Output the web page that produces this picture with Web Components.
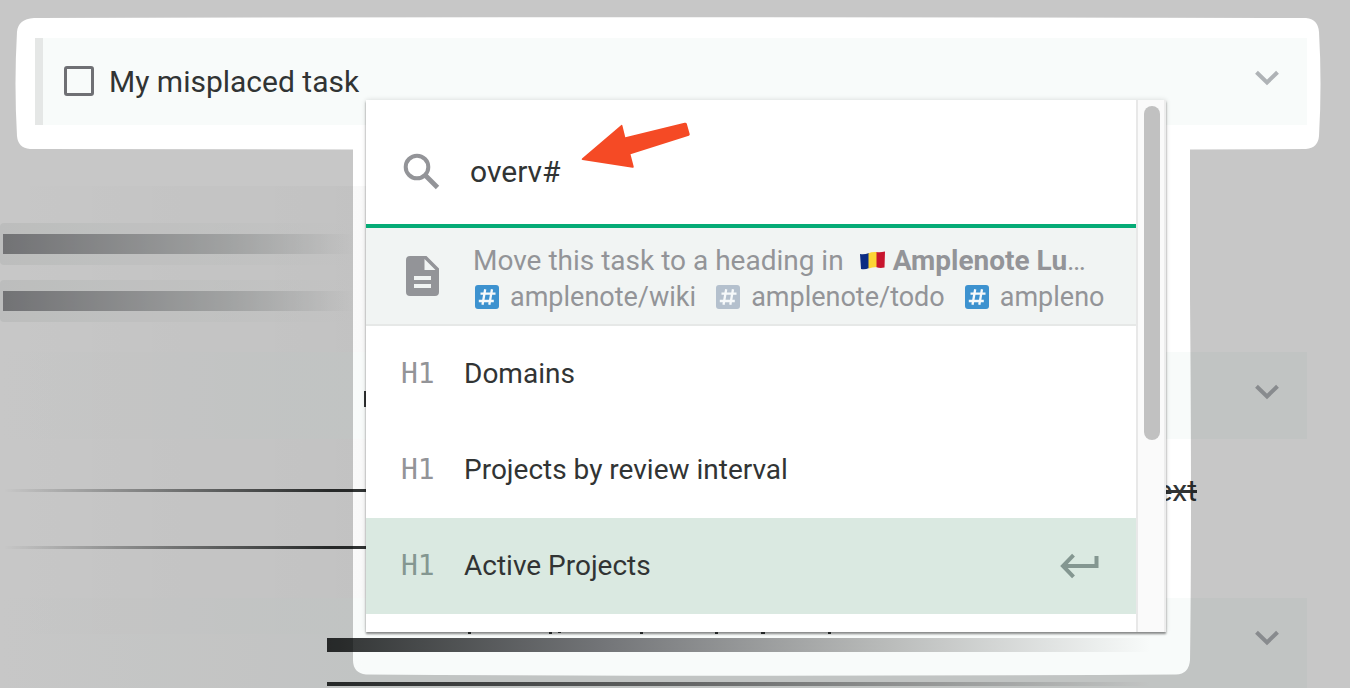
<!DOCTYPE html>
<html lang="en">
<head>
<meta charset="utf-8">
<title>Move task</title>
<style>
  body { margin: 0; background: #fff; font-family: Roboto, "Liberation Sans", sans-serif; color: #313434; }
</style>
</head>
<body>
<note-page></note-page>
<script>
const define = (name, html) => {
  const template = document.createElement('template');
  template.innerHTML = html;
  customElements.define(name, class extends HTMLElement {
    constructor() {
      super();
      this.attachShadow({ mode: 'open' }).append(template.content.cloneNode(true));
    }
  });
};

define('chevron-button', `
  <style>
    :host { display: block; }
    button { display: block; border: 0; padding: 8px; background: none; color: #afb3b6; }
    svg { display: block; }
  </style>
  <button type="button" aria-label="Expand task">
    <svg width="24" height="16" viewBox="0 0 24 16" fill="none" stroke="currentColor" stroke-width="4"><path d="M1.500 2.200 12 12.500 22.500 2.200"/></svg>
  </button>`);

define('task-row', `
  <style>
    :host { display: flex; align-items: flex-start; height: 87px; box-sizing: border-box; background: #f8fbfa; }
    .body { flex: 1; min-width: 0; }
    chevron-button { margin: 24px 20px 0 0; }
  </style>
  <div class="body"><slot></slot></div>
  <chevron-button></chevron-button>`);

define('task-check', `
  <style>
    :host { display: block; }
    label { display: flex; align-items: center; gap: 15px; height: 86px; padding-left: 21px; font-size: 30px; line-height: 40px; }
    input { appearance: none; margin: 0; width: 30px; height: 30px; box-sizing: border-box; border: 3px solid #6f7074; border-radius: 3px; }
    span { padding-top: 2px; }
  </style>
  <label><input type="checkbox"><span><slot></slot></span></label>`);

/* A blurred-out line of text: fades from a solid left end. */
define('smear-bar', `
  <style>
    :host { display: block; background: linear-gradient(to right, #f1f3f2, #f1f3f200 353px); border-radius: 4px; padding: 11px 0 11px 3px; }
    div { height: 20px; background: linear-gradient(to right, #929396, #ced0d0 225px, #f9f9f900 350px); }
  </style>
  <div></div>`);

/* A struck-out line whose visible text is aligned to the right. */
define('struck-line', `
  <style>
    :host { display: flex; align-items: center; height: 57px; }
    i { width: 366px; height: 3px; background: linear-gradient(to right, #31343400 4px, #313434 330px); }
    del { margin: 0 153px 0 auto; font-size: 30px; line-height: 40px; text-decoration: line-through 3px; }
  </style>
  <i></i><del><slot></slot></del>`);

define('spotlight-mask', `
  <style>
    :host { display: block; position: absolute; inset: 0; pointer-events: none; }
    svg { display: block; width: 100%; height: 100%; }
  </style>
  <svg viewBox="0 0 1350 688" preserveAspectRatio="none" fill="#000" fill-opacity=".218" fill-rule="evenodd">
    <path d="M0 0H1350V688H0Z M34 18Q675 16.500 1306 18Q1318 19 1319 32Q1322 84 1319 136Q1318 148 1306 149L1190 149.500V300Q1192 520 1190 660Q1189 674 1176 674.600Q760 677 366 674.500Q353 673 353 660V149.500L30 149Q18 148 17 136Q14 84 17 32Q18 19 34 18Z"/>
  </svg>`);

define('red-arrow', `
  <style>:host { display: block; } svg { display: block; }</style>
  <svg width="110" height="48" viewBox="581 121 110 48" fill="#f54a25"><path d="M582 158.500 621 125.200Q622 124.300 622.400 125.500L625.300 137.300 684.500 122.800Q686.300 122.200 686.800 123.800L689.700 134Q690 135.300 688.800 135.800L630.500 154.200 633.700 166.500Q634 168 632.500 167.700L582.500 160Q581 159.500 582 158.500Z"/></svg>`);

define('search-box', `
  <style>
    :host { display: block; background: #fff; border-bottom: 4px solid #05ab76; }
    label { display: flex; align-items: center; height: 124px; padding: 0 36px; gap: 30px; }
    svg { flex: none; margin-top: 18px; }
    input { flex: 1; min-width: 0; border: 0; outline: 0; padding: 0; margin-top: 20px; background: none; font: 30px/40px Roboto, "Liberation Sans", sans-serif; color: #313434; }
  </style>
  <label>
    <svg width="38" height="38" viewBox="0 0 38 38" fill="none" stroke="#939498"><circle cx="15" cy="15" r="11.300" stroke-width="4"/><path d="M23.500 23.500 35.500 35.500" stroke-width="4.800"/></svg>
    <input type="text" value="overv#" aria-label="Search notes">
  </label>`);

define('tag-label', `
  <style>
    :host { display: flex; align-items: center; gap: 11px; flex: none; --tag: #3d92cf; }
    :host([muted]) { --tag: #b4c0cd; }
  </style>
  <svg width="24" height="24" viewBox="0 0 24 24"><rect width="24" height="24" rx="3" fill="var(--tag)"/><path d="M5.500 8.600H20.500M3.800 16H18.800M10.200 4.200 7.500 19.800M17 4.200 14.300 19.800" stroke="#f6f9fa" stroke-width="2.300" fill="none"/></svg>
  <span><slot></slot></span>`);

define('note-summary', `
  <style>
    :host { display: flex; align-items: center; height: 96px; background: #f1f4f3; border-bottom: 2px solid #e6e8e7; color: #939498; padding: 0 30px 0 40px; gap: 34px; }
    svg { flex: none; display: block; }
    .text { flex: 1; min-width: 0; padding-top: 5px; }
    .title { display: flex; align-items: center; gap: 8px; font-size: 28px; line-height: 36px; white-space: nowrap; }
    .title span { margin-right: 8px; }
    .title i { font-style: normal; font-weight: 400; }
    .tags { display: flex; gap: 20px; padding-left: 2px; font-size: 27px; line-height: 36px; white-space: nowrap; }
  </style>
  <svg width="33" height="40" viewBox="0 0 33 40"><path fill="#939498" fill-rule="evenodd" d="M4 0H20.500L33 12.500V36Q33 40 29 40H4Q0 40 0 36V4Q0 0 4 0ZM18.500 3V14H29.500ZM8 20V24H25V20ZM8 28V32H25V28Z"/></svg>
  <div class="text">
    <div class="title"><span>Move this task to a heading in</span>
      <svg width="25" height="20" viewBox="0 0 25 20"><path fill="#0b2c83" d="M0 3Q4 4 9 2V17Q5 19 1 18Z"/><path fill="#fcd535" d="M8.500 2.200Q12 .5 17 1V16Q12 16 8.500 17.500Z"/><path fill="#c8152d" d="M16.500 1Q20 1.800 25 .5L24.500 16.500Q20 17.500 16.500 16.200Z"/></svg>
      <b>Amplenote Lu<i>…</i></b></div>
    <div class="tags"><tag-label>amplenote/wiki</tag-label><tag-label muted>amplenote/todo</tag-label><tag-label>ampleno</tag-label></div>
  </div>`);

define('heading-option', `
  <style>
    :host { display: block; }
    button { display: flex; align-items: center; width: 100%; height: 96px; border: 0; padding: 0 37px 0 35px; background: #fff; color: #313434; font: 28px/36px Roboto, "Liberation Sans", sans-serif; text-align: left; }
    .level { width: 63px; font: 28px/36px "DejaVu Sans Mono", monospace; color: #939498; }
    svg { display: none; margin-left: auto; }
    :host([selected]) button { background: #dae9e1; }
    :host([selected]) .level { color: #849791; }
    :host([selected]) svg { display: block; }
  </style>
  <button type="button"><span class="level">H1</span><span><slot></slot></span>
    <svg width="39" height="26" viewBox="0 0 39 26" fill="none" stroke="#849791" stroke-width="4"><path d="M36.500 3V13H4"/><path d="M13.500 2.200 3 13 13.500 23.800"/></svg>
  </button>`);

define('move-menu', `
  <style>
    :host { display: flex; background: #fff; box-shadow: 0 2px 2px rgba(0,0,0,.42), 0 0 5px rgba(0,0,0,.14); }
    .list { flex: 1; min-width: 0; height: 532px; overflow: hidden; }
    .track { width: 26px; border-left: 2px solid #e8e8e8; border-right: 2px solid #ededed; background: #fafafa; padding: 6px 0 0; }
    .thumb { width: 16px; height: 334px; margin-left: 6px; border-radius: 8px; background: #c1c1c1; }
  </style>
  <div class="list">
    <search-box></search-box>
    <note-summary></note-summary>
    <heading-option>Domains</heading-option>
    <heading-option>Projects by review interval</heading-option>
    <heading-option selected>Active Projects</heading-option>
  </div>
  <div class="track"><div class="thumb"></div></div>`);

define('note-page', `
  <style>
    :host { display: block; position: relative; overflow: hidden; box-sizing: border-box; min-height: 100vh; padding-top: 38px;
      background: linear-gradient(to right, #00000000, #00000006) 0 186px / 366px 448px no-repeat; }
    .first { margin: 0 43px 0 35px; border-left: 8px solid #e5e7e6; }
    .smears { display: grid; gap: 15px; height: 166px; margin-top: 61px; box-sizing: border-box; padding-top: 37px; align-content: start; }
    smear-bar { width: 363px; box-sizing: border-box; }
    .faded { margin-right: 43px; background: linear-gradient(to right, #f8fbfa00, #f8fbfa 366px); }
    .edge { width: 2px; height: 16px; margin: 39px 0 0 364px; background: #313434; }
    .struck { height: 159px; box-sizing: border-box; padding-top: 23px; }
    .last { height: 90px; }
    .bar { height: 14px; margin: 40px 80px 30px 327px; background: linear-gradient(to right, #313434, #75777a 34%, #b6b8b7 65%, #f8fbfa00 98%); }
    .rule { height: 4px; margin: 0 80px 0 327px; background: linear-gradient(to right, #313434, #7b7d7d 40%, #f8fbfa00 98%); }
    spotlight-mask { z-index: 1; }
    move-menu { position: absolute; z-index: 2; top: 100px; left: 366px; width: 800px; }
    .ticks { position: absolute; z-index: 3; top: 632px; left: 468px; }
    red-arrow { position: absolute; z-index: 3; top: 121px; left: 581px; }
  </style>
  <task-row class="first"><task-check>My misplaced task</task-check></task-row>
  <div class="smears"><smear-bar></smear-bar><smear-bar></smear-bar></div>
  <task-row class="faded"><div class="edge"></div></task-row>
  <div class="struck"><struck-line>ext</struck-line><struck-line></struck-line></div>
  <task-row class="faded last"><div class="bar"></div><div class="rule"></div></task-row>
  <spotlight-mask></spotlight-mask>
  <move-menu></move-menu>
  <svg class="ticks" width="366" height="3" viewBox="0 0 366 3" fill="#232626"><path d="M0 0h3v2h-3zM81 0h3v2h-3zM90 0h3v1h-3zM172 0h3v2h-3zM247 0h3v2h-3zM293 0h4v2h-4zM360 0h3v2h-3z"/></svg>
  <red-arrow></red-arrow>`);
</script>
</body>
</html>
